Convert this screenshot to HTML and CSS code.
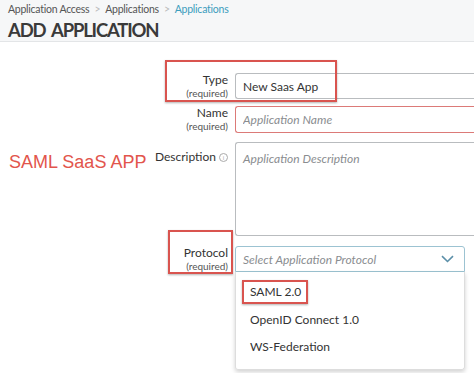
FILE: index.html
```html
<!doctype html>
<html lang="en">
<head>
  <meta charset="UTF-8">
  <title>Add Application</title>
  <link rel="stylesheet" href="styles.css">
</head>
<body>
  <header class="page-head">
    <nav class="crumbs">
      <span>Application Access</span>
      <span class="crumbs--sep">&gt;</span>
      <span>Applications</span>
      <span class="crumbs--sep">&gt;</span>
      <span class="crumbs--current">Applications</span>
    </nav>
    <h1>ADD APPLICATION</h1>
  </header>

  <main class="form">
    <div class="form--item">
      <label for="type">Type<small>(required)</small></label>
      <input type="text" id="type" value="New Saas App">
    </div>
    <div class="form--item">
      <label for="name">Name<small>(required)</small></label>
      <input type="text" id="name" class="input__error" placeholder="Application Name">
    </div>
    <div class="form--item form--item__tall">
      <label for="desc">Description <span class="info">i</span></label>
      <textarea id="desc" placeholder="Application Description"></textarea>
    </div>
    <div class="form--item">
      <label for="protocol">Protocol<small>(required)</small></label>
      <div class="select">
        <div class="select--box">
          <span>Select Application Protocol</span>
          <svg width="13" height="8" viewBox="0 0 13 8"><path d="M1 1.2 6.5 6.5 12 1.2" fill="none" stroke="#5b8fa8" stroke-width="1.6"/></svg>
        </div>
        <ul class="select--menu">
          <li>SAML 2.0</li>
          <li>OpenID Connect 1.0</li>
          <li>WS-Federation</li>
        </ul>
      </div>
    </div>
  </main>

  <p class="note">SAML SaaS APP</p>
  <span class="mark mark__type"></span>
  <span class="mark mark__protocol"></span>
  <span class="mark mark__saml"></span>
</body>
</html>
```

FILE: styles.css
```css
body {
  margin: 0;
  width: 474px;
  height: 373px;
  overflow: hidden;
  position: relative;
  background-color: #fff;
  color: #333;
  font-family: Lato, "Open Sans", sans-serif;
}

.page-head {
  background-color: #f6f7f8;
  border-bottom: 1px solid #e3e5e7;
  padding: 2px 8px 0;
  height: 39px;
}

.crumbs {
  display: flex;
  gap: 5px;
  font-size: 10.5px;
  letter-spacing: -.25px;
  line-height: 15px;
  color: #555;
}

.crumbs--sep {
  color: #bbb;
}

.crumbs--current {
  color: #3c9dbd;
}

.page-head > h1 {
  margin: 2px 0 0;
  font-size: 18.5px;
  line-height: 22px;
  font-weight: 700;
  color: #3a3a3a;
  letter-spacing: -1.2px;
  word-spacing: 3px;
}

.form {
  display: flex;
  flex-direction: column;
  gap: 7px;
  padding-top: 31px;
}

.form--item {
  display: grid;
  grid-template-columns: 228px minmax(0, 1fr);
  column-gap: 7px;
  align-items: start;
}

.form--item > label {
  display: flex;
  flex-direction: column;
  align-items: flex-end;
  font-size: 12px;
  line-height: 14px;
  color: #333;
}

.form--item > label > small {
  font-size: 10px;
  line-height: 12px;
  color: #555;
}

.form--item__tall {
  margin-top: 1px;
}

.form--item__tall > label {
  flex-direction: row;
  justify-content: flex-end;
  align-items: center;
  gap: 3px;
  padding-top: 9px;
}

.info {
  display: inline-block;
  width: 7px;
  height: 7px;
  border: 1px solid #aaa;
  border-radius: 50%;
  font-size: 6px;
  line-height: 7px;
  text-align: center;
  color: #aaa;
}

input,
textarea {
  box-sizing: border-box;
  width: 100%;
  margin: 0;
  height: 26px;
  padding: 0 7px;
  border: 1px solid #b9bcbf;
  border-right: 0;
  border-radius: 3px 0 0 3px;
  font-family: inherit;
  font-size: 12px;
  color: #333;
  background-color: #fff;
}

input::placeholder,
textarea::placeholder {
  color: #8a8d90;
  font-style: italic;
}

.input__error {
  border-color: #dc7a78;
  height: 27px;
}

textarea {
  display: block;
  height: 94px;
  padding-top: 8px;
  resize: none;
  margin-top: 1px;
}

.form--item:last-child {
  margin-top: 3px;
}

.select {
  width: 230px;
}

.select--box {
  box-sizing: border-box;
  height: 26px;
  display: flex;
  align-items: center;
  justify-content: space-between;
  padding: 0 10px 0 7px;
  border: 1px solid #9cc3d2;
  border-radius: 3px 3px 0 0;
  font-size: 12px;
  font-style: italic;
  color: #8a8d90;
}

.select--menu {
  list-style: none;
  margin: 0;
  padding: 6px 0 8px;
  border: 1px solid #ddd;
  border-top: 0;
  border-radius: 0 0 3px 3px;
  box-shadow: 0 2px 4px rgba(0, 0, 0, .18);
  font-size: 12px;
}

.select--menu > li {
  line-height: 27.5px;
  padding-left: 14px;
  color: #333;
}

.note {
  position: absolute;
  left: 9px;
  top: 152px;
  margin: 0;
  font-family: "Liberation Sans", Arial, sans-serif;
  font-size: 18px;
  color: #e2554c;
}

.mark {
  position: absolute;
  border: 2px solid #d9544f;
  box-shadow: 0 1px 2px rgba(0, 0, 0, .3);
}

.mark__type {
  left: 165px;
  top: 60px;
  width: 168px;
  height: 38px;
}

.mark__protocol {
  left: 168px;
  top: 230px;
  width: 61px;
  height: 40px;
}

.mark__saml {
  left: 242px;
  top: 280px;
  width: 62px;
  height: 20px;
}
```
